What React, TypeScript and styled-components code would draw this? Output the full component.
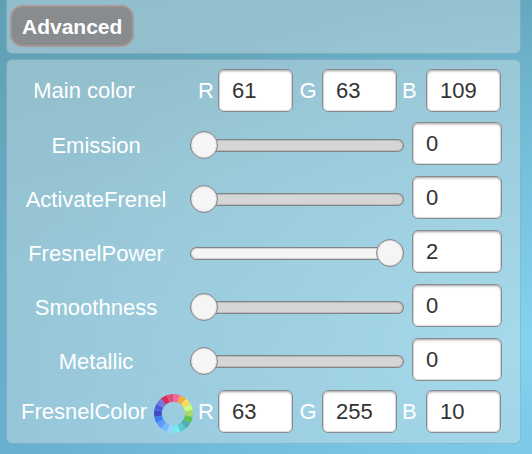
import React, { useState } from "react";
import styled, { createGlobalStyle } from "styled-components";

const GlobalStyle = createGlobalStyle`
  *, *::before, *::after { box-sizing: border-box; }
  body {
    margin: 0;
    min-height: 100vh;
    font-family: "Liberation Sans", Arial, sans-serif;
    font-size: 22px;
    line-height: 26px;
    color: #fff;
    background:
      radial-gradient(ellipse 100% 80% at 100% 76%, rgba(134, 214, 242, 0.9), rgba(134, 214, 242, 0)),
      linear-gradient(168deg, #609fb3 0%, #67adc6 45%, #69b1d5 100%);
  }
`;

const Page = styled.main`
  display: flex;
  flex-direction: column;
  gap: 5px;
  padding: 0 11px 10px 6px;
`;

const Panel = styled.section`
  display: flex;
  flex-direction: column;
  border: 1px solid rgba(60, 120, 145, 0.28);
  border-radius: 6px;
  background: rgba(208, 226, 230, 0.45);
`;

const HeaderPanel = styled(Panel)`
  align-items: flex-start;
  padding: 5px 3px 6px;
  border-top: 0;
  border-radius: 0 0 6px 6px;
`;

const SettingsPanel = styled(Panel)`
  padding: 9px 18px 10px 7px;
`;

const AdvancedButton = styled.button`
  height: 42px;
  padding: 2px 10px 0;
  border: 2px solid #a49796;
  border-radius: 13px;
  background: #888c8e;
  color: #fff;
  font: bold 21px/26px "Liberation Sans", Arial, sans-serif;
`;

const Sliders = styled.div`
  display: flex;
  flex-direction: column;
  gap: 8px;
  margin: 10px 0 6px;
`;

const SliderRow = styled.div`
  display: grid;
  grid-template-columns: 164px minmax(60px, 1fr) 90px;
  align-items: center;
  height: 46px;
`;

const SliderLabel = styled.label`
  padding-top: 2px;
  text-align: center;
`;

const ColorRow = styled.div`
  display: grid;
  grid-template-columns: 140px 35px repeat(3, minmax(60px, 1fr));
  align-items: center;
  padding-right: 1px;
`;

const ColorLabel = styled.span`
  text-align: center;
`;

const Channel = styled.label<{ $align: string }>`
  display: grid;
  grid-template-columns: 29px minmax(0, 1fr);
  align-items: center;

  > span {
    padding: 0 4px 0 5px;
    text-align: ${(p) => p.$align};
  }
`;

const NumberBox = styled.input`
  width: 100%;
  height: 43px;
  padding: 0 13px;
  border: 1px solid #858d91;
  border-radius: 6px;
  background: #fff;
  box-shadow: inset 0 2px 2px rgba(0, 0, 0, 0.16), inset 0 0 1px 1px rgba(0, 0, 0, 0.14);
  color: #323232;
  font: 22px/26px "Liberation Sans", Arial, sans-serif;
  align-self: start;
`;

const Range = styled.input<{ $full: boolean }>`
  appearance: none;
  width: calc(100% - 20px);
  height: 28px;
  margin: 0 8px 0 12px;
  background: transparent;

  &::-webkit-slider-runnable-track {
    height: 13px;
    border-radius: 7px;
    background: ${(p) => (p.$full ? "#f5f5f5" : "#d6d6d6")};
    box-shadow: inset 0 0 0 1px #7f8486, inset 0 0 1px 2px rgba(0, 0, 0, 0.14);
  }

  &::-webkit-slider-thumb {
    appearance: none;
    width: 28px;
    height: 28px;
    margin-top: -8px;
    border: 1px solid #7f8486;
    border-radius: 50%;
    background: #f5f5f5;
    box-shadow: inset 0 0 1px 1px rgba(0, 0, 0, 0.12);
  }
`;

const WheelButton = styled.button`
  display: flex;
  width: 39px;
  height: 43px;
  padding: 4px 0 0;
  border: 0;
  background: none;
`;

const wheelColors = [
  "#ec6a9c", "#f0ae3c", "#fbd95f", "#cdfb7c", "#a5d968", "#5dc44e",
  "#50afb4", "#5cc8cf", "#77eaf0", "#94d6fd", "#7ab9fb", "#609cf7",
  "#3f7df5", "#3e4bc4", "#4c5bdc", "#7377dc", "#d92c55", "#e54a7d",
];

const point = (radius: number, degrees: number) => {
  const a = (degrees * Math.PI) / 180;
  return `${20 + radius * Math.sin(a)} ${20 - radius * Math.cos(a)}`;
};

const ColorWheel = () => (
  <svg width="39" height="39" viewBox="0 0 40 40" aria-hidden="true">
    {wheelColors.map((fill, i) => {
      const from = i * 20;
      const to = from + 20;
      return (
        <path
          key={fill}
          fill={fill}
          d={`M${point(20, from)}A20 20 0 0 1 ${point(20, to)}L${point(12, to)}A12 12 0 0 0 ${point(12, from)}Z`}
        />
      );
    })}
  </svg>
);

const channelAlign = { R: "right", G: "center", B: "left" };

type ChannelName = keyof typeof channelAlign;

const ColorFields = ({ name, values }: { name: string; values: Record<ChannelName, number> }) => (
  <>
    {(Object.keys(channelAlign) as ChannelName[]).map((c) => (
      <Channel key={c} $align={channelAlign[c]}>
        <span>{c}</span>
        <NumberBox inputMode="numeric" aria-label={`${name} ${c}`} defaultValue={values[c]} />
      </Channel>
    ))}
  </>
);

const SliderField = ({ name, initial }: { name: string; initial: number }) => {
  const [value, setValue] = useState(String(initial));
  return (
    <SliderRow>
      <SliderLabel htmlFor={name}>{name}</SliderLabel>
      <Range
        id={name}
        type="range"
        min={0}
        max={2}
        step={0.01}
        value={Number(value) || 0}
        $full={Number(value) > 0}
        onChange={(e) => setValue(e.target.value)}
      />
      <NumberBox
        inputMode="decimal"
        aria-label={`${name} value`}
        value={value}
        onChange={(e) => setValue(e.target.value)}
      />
    </SliderRow>
  );
};

const sliders = [
  { name: "Emission", initial: 0 },
  { name: "ActivateFrenel", initial: 0 },
  { name: "FresnelPower", initial: 2 },
  { name: "Smoothness", initial: 0 },
  { name: "Metallic", initial: 0 },
];

export default function App() {
  return (
    <>
      <GlobalStyle />
      <Page>
        <HeaderPanel>
          <AdvancedButton type="button">Advanced</AdvancedButton>
        </HeaderPanel>
        <SettingsPanel>
          <ColorRow role="group" aria-label="Main color">
            <ColorLabel>Main color</ColorLabel>
            <span />
            <ColorFields name="Main color" values={{ R: 61, G: 63, B: 109 }} />
          </ColorRow>
          <Sliders>
            {sliders.map((s) => (
              <SliderField key={s.name} {...s} />
            ))}
          </Sliders>
          <ColorRow role="group" aria-label="FresnelColor">
            <ColorLabel>FresnelColor</ColorLabel>
            <WheelButton type="button" aria-label="Pick FresnelColor">
              <ColorWheel />
            </WheelButton>
            <ColorFields name="FresnelColor" values={{ R: 63, G: 255, B: 10 }} />
          </ColorRow>
        </SettingsPanel>
      </Page>
    </>
  );
}
